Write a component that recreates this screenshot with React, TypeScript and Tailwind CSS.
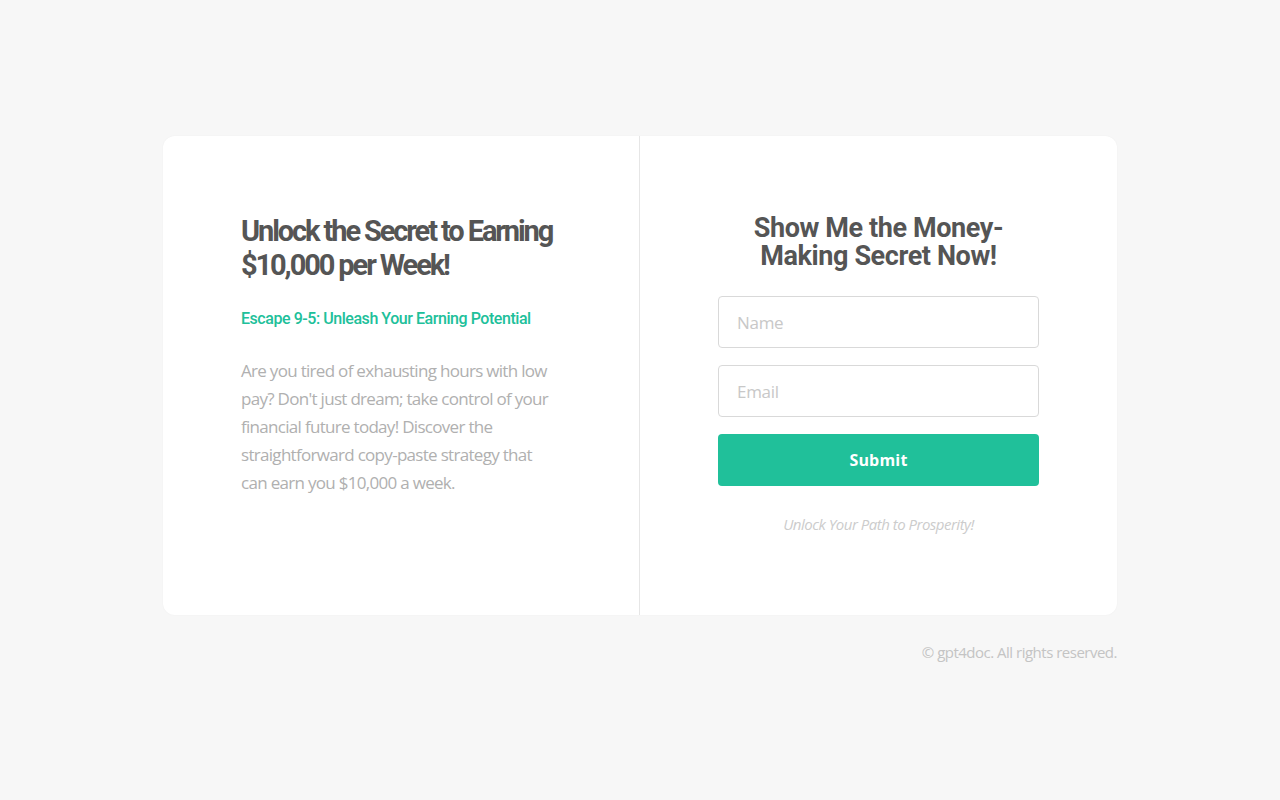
export default function App() {
  return (
    <div className="min-h-screen w-full bg-[#f7f7f7] pt-[136px] font-['Open_Sans',sans-serif]">
      <div className="mx-auto w-[954px]">
        <div className="grid grid-cols-2 overflow-hidden rounded-xl bg-white shadow-[0_0_2px_rgba(0,0,0,0.04)]">
          {/* Left pitch */}
          <div className="border-r border-[#e6e6e6] px-[78px] pt-[78px] pb-[60px]">
            <h1 className="-mr-[10px] font-['Roboto',sans-serif] text-[29px] font-bold leading-[34px] tracking-[-2.1px] text-[#555555]">
              Unlock the Secret to Earning $10,000 per Week!
            </h1>
            <h2 className="mt-[27px] font-['Roboto',sans-serif] text-[16px] font-medium leading-[20px] tracking-[-0.45px] text-[#20c09a]">
              Escape 9-5: Unleash Your Earning Potential
            </h2>
            <p className="mt-[28px] text-[17px] leading-[28px] tracking-[-0.7px] text-[#b0b0b0]">
              Are you tired of exhausting hours with low pay? Don't just dream; take control of your financial future today! Discover the straightforward copy-paste strategy that can earn you $10,000 a week.
            </p>
          </div>

          {/* Right form */}
          <div className="px-[78px] pt-[78px] pb-[80px]">
            <h2 className="mx-auto w-[270px] text-center font-['Roboto',sans-serif] text-[27px] font-bold leading-[28px] tracking-[-0.4px] text-[#555555]">
              Show Me the Money-Making Secret Now!
            </h2>
            <form className="mt-[26px] flex flex-col gap-[17px]" onSubmit={(e) => e.preventDefault()}>
              <input
                type="text"
                placeholder="Name"
                className="h-[52px] w-full rounded-[4px] border border-[#d9d9d9] px-[18px] text-[17px] tracking-[-0.3px] text-[#555] outline-none placeholder:text-[#c8c8c8]"
              />
              <input
                type="email"
                placeholder="Email"
                className="h-[52px] w-full rounded-[4px] border border-[#d9d9d9] px-[18px] text-[17px] tracking-[-0.3px] text-[#555] outline-none placeholder:text-[#c8c8c8]"
              />
              <button
                type="submit"
                className="h-[52px] w-full rounded-[4px] bg-[#20c09a] text-[16px] font-bold tracking-[0.2px] text-white"
              >
                Submit
              </button>
            </form>
            <p className="mt-[27px] text-center text-[15px] italic leading-[22px] tracking-[-0.5px] text-[#cccccc]">
              Unlock Your Path to Prosperity!
            </p>
          </div>
        </div>

        <p className="mt-[26px] text-right text-[15px] leading-[22px] tracking-[-0.5px] text-[#c4c4c4]">
          © gpt4doc. All rights reserved.
        </p>
      </div>
    </div>
  )
}
